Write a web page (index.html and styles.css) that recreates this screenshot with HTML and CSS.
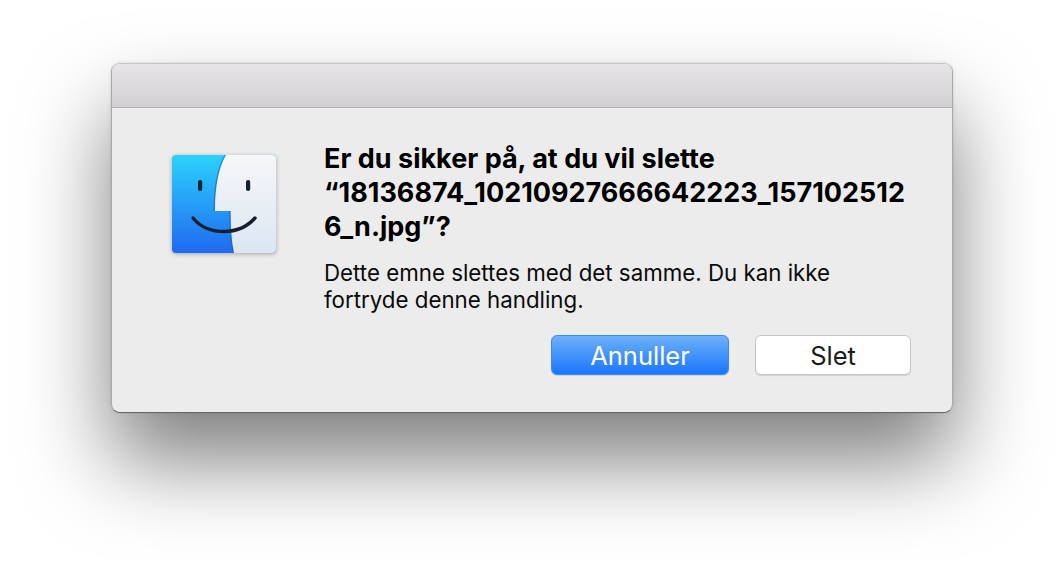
FILE: index.html
```html
<!DOCTYPE html>
<html>
	<head>
		<meta charset="UTF-8">
		<title>Slet</title>
		<link rel="stylesheet" href="styles.css">
	</head>
	<body>
		<div class="dialog">
			<div class="titlebar"></div>
			<div class="content">
				<svg class="finder" width="104" height="98" viewBox="0 0 104 98">
					<defs>
						<linearGradient id="blue" x1="0" y1="0" x2="0" y2="1">
							<stop offset="0" stop-color="#2bd3fd"/>
							<stop offset="1" stop-color="#2069f0"/>
						</linearGradient>
						<linearGradient id="white" x1="0" y1="0" x2="0" y2="1">
							<stop offset="0" stop-color="#f6f7f9"/>
							<stop offset="1" stop-color="#dbe6f2"/>
						</linearGradient>
						<clipPath id="tile">
							<rect width="104" height="98" rx="4"/>
						</clipPath>
					</defs>
					<g clip-path="url(#tile)">
						<rect width="104" height="98" fill="url(#blue)"/>
						<path d="M54 0C47 12 43 30 43 56H58.700C58.500 72 59.500 86 62 98H104V0Z" fill="#1b5fb0" opacity=".55" transform="translate(-1.500 0)"/>
						<path d="M54 0C47 12 43 30 43 56H58.700C58.500 72 59.500 86 62 98H104V0Z" fill="url(#white)"/>
					</g>
					<rect x="26" y="25" width="4.200" height="11" rx="2.100" fill="#14202e"/>
					<rect x="74" y="25" width="4.200" height="11" rx="2.100" fill="#14202e"/>
					<path d="M21 63C28 72 40 76.500 52 76.500C64 76.500 75 72 83 63" fill="none" stroke="#14202e" stroke-width="3.400" stroke-linecap="round"/>
				</svg>
				<div class="text">
					<h1>Er du sikker på, at du vil slette<br>“18136874_10210927666642223_157102512<br>6_n.jpg”?</h1>
					<p>Dette emne slettes med det samme. Du kan ikke<br>fortryde denne handling.</p>
					<div class="buttons">
						<button class="btn primary">Annuller</button>
						<button class="btn">Slet</button>
					</div>
				</div>
			</div>
		</div>
	</body>
</html>
```

FILE: styles.css
```css
*{
	padding: 0;
	margin: 0;
	box-sizing: border-box;
}
html, body{
	height: 100%;
	overflow: hidden;
}
body{
	background: #fff;
	font-family: Inter, "Liberation Sans", Arial, sans-serif;
	color: #0a0a0a;
	padding: 63px 111px 0;
}
.dialog{
	width: 842px;
	height: 350px;
	border-radius: 9px;
	background: #ececec;
	border: 1px solid #a9a9a9;
	border-top-color: #c6c6c6;
	border-bottom-color: #666;
	box-shadow: 0 48px 85px rgba(0,0,0,.5), 0 0 3px rgba(0,0,0,.15);
	overflow: hidden;
}
.titlebar{
	height: 44px;
	background: linear-gradient(#e7e5e7, #d2d0d2);
	border-bottom: 1px solid #b2b0b2;
}
.content{
	display: flex;
	padding: 34px 41px 0 60px;
}
.finder{
	flex: none;
	margin-top: 13px;
	margin-right: 48px;
	filter: drop-shadow(0 1px 2px rgba(0,0,0,.3));
}
.text{
	flex: 1;
}
h1{
	font-size: 27px;
	font-weight: bold;
	line-height: 34px;
	color: #000;
	white-space: nowrap;
}
p{
	margin-top: 15px;
	font-size: 22.300px;
	line-height: 27px;
	white-space: nowrap;
}
.buttons{
	display: flex;
	justify-content: flex-end;
	gap: 26px;
	margin-top: 22px;
}
.btn{
	width: 156px;
	height: 40px;
	border-radius: 6px;
	border: 1px solid #c6c6c6;
	background: #fff;
	font-family: inherit;
	font-size: 25.500px;
	color: #1c1c1c;
	box-shadow: 0 1px 1px rgba(0,0,0,.12);
}
.primary{
	width: 178px;
	border-color: #3d8cf2;
	background: linear-gradient(#6eb0fa, #1a76fd);
	color: #fff;
}
```
